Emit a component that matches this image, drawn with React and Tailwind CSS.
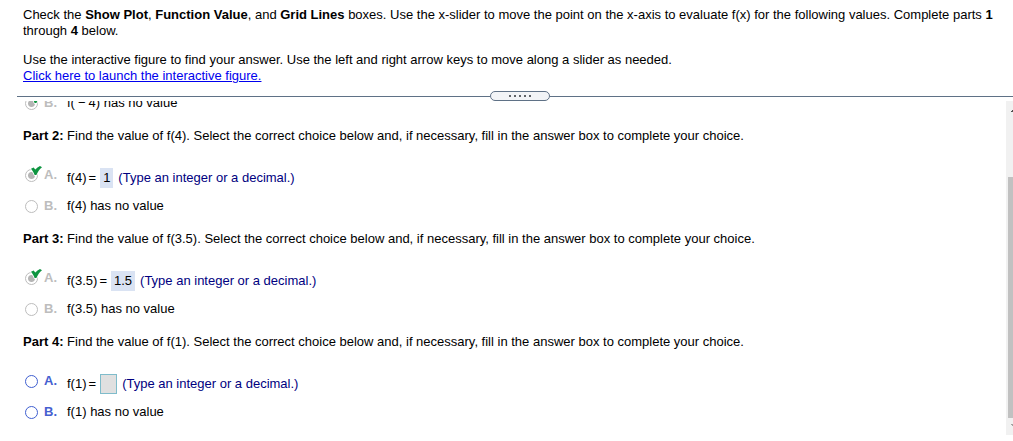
import React, { useState } from "react";

function CheckBadge() {
  return (
    <svg
      className="pointer-events-none absolute -top-[4px] left-[5px] h-[11px] w-[13px]"
      viewBox="-1 -1 13 11"
      aria-hidden="true"
    >
      <path
        d="M0 2.8 L2.6 1.4 L4.3 3.6 C5.7 2 7.2 0.8 9 0 L11 1.2 C8.6 3.2 6.9 5.6 5.4 9 L3.6 9 C2.8 6.8 1.6 5 0 2.8 Z"
        fill="#0d9440"
        stroke="#ffffff"
        strokeWidth="1.6"
        paintOrder="stroke"
      />
    </svg>
  );
}

function Choice({ name, letter, checked, disabled, onSelect, raised, children }) {
  const id = `${name}-${letter}`;
  return (
    <div className={raised ? "flex h-[22px] items-center" : "flex h-4 items-center"}>
      <div className={raised ? "flex h-4 w-11 items-center self-start pl-[2px]" : "flex h-4 w-11 items-center pl-[2px]"}>
        <span className="relative flex h-[13px] w-[13px] items-center justify-center">
          <input
            type="radio"
            id={id}
            name={name}
            checked={checked}
            disabled={disabled}
            onChange={onSelect}
            className="h-[13px] w-[13px] appearance-none rounded-full border border-[#3f5fd0] bg-white checked:bg-[radial-gradient(circle,#3f5fd0_0_3px,transparent_4px)] disabled:border-[#bdbdbd] disabled:checked:bg-[radial-gradient(circle,#b5b5b5_0_3px,transparent_4px)]"
          />
          {checked && disabled && <CheckBadge />}
        </span>
        <label
          htmlFor={id}
          className={disabled ? "ml-[6px] font-bold text-[#bdbdbd]" : "ml-[6px] font-bold text-[#4560d0]"}
        >
          {letter}.
        </label>
      </div>
      <div className="flex items-center whitespace-pre">{children}</div>
    </div>
  );
}

function Part({ number, arg, answer }) {
  const solved = answer !== undefined;
  const [choice, setChoice] = useState(solved ? "A" : null);
  const [value, setValue] = useState("");
  const name = `part-${number}`;
  return (
    <section>
      <p>
        <b>Part {number}:</b> Find the value of f({arg}). Select the correct choice below and, if necessary, fill in the
        answer box to complete your choice.
      </p>
      <div className="mt-[23px] flex flex-col gap-[9px]">
        <Choice name={name} letter="A" raised checked={choice === "A"} disabled={solved} onSelect={() => setChoice("A")}>
          <span className="flex gap-[2px]">
            <span>f({arg})</span>
            <span>=</span>
          </span>
          {solved ? (
            <span className="ml-1 bg-[#dae3f3] px-[3px] py-[2px]">{answer}</span>
          ) : (
            <input
              type="text"
              aria-label={`f(${arg})`}
              value={value}
              onChange={(e) => setValue(e.target.value)}
              className="ml-1 h-5 w-[17px] border border-[#7fbccb] bg-[#e0e0e0] text-center outline-none"
            />
          )}
          <span className="ml-[5px] text-[#000080]">(Type an integer or a decimal.)</span>
        </Choice>
        <Choice name={name} letter="B" checked={choice === "B"} disabled={solved} onSelect={() => setChoice("B")}>
          f({arg}) has no value
        </Choice>
      </div>
    </section>
  );
}

function ScrollTrack() {
  return (
    <div className="flex w-[7px] shrink-0 flex-col overflow-hidden bg-[#f1f1f1] pl-[2px]" aria-hidden="true">
      <svg className="mt-[8px] ml-[3px] h-[3px] w-[7px] shrink-0" viewBox="0 0 7 3">
        <path d="M0 3V2H1V1H2V0H4V3Z" fill="#505050" />
      </svg>
      <div className="mt-[65px] h-[241px] bg-[#c1c1c1]" />
      <svg className="mt-[6px] ml-[3px] h-[3px] w-[7px] shrink-0" viewBox="0 0 7 3">
        <path d="M0 0H4V3H2V2H1V1H0Z" fill="#a3a3a3" />
      </svg>
    </div>
  );
}

export default function App() {
  return (
    <main className="overflow-hidden bg-white font-['Liberation_Sans',Arial,sans-serif] text-[13px] leading-4 text-black">
      <header className="pt-[7px] pr-4 pl-[23px]">
        <p>
          Check the <b>Show Plot</b>, <b>Function Value</b>, and <b>Grid Lines</b> boxes. Use the x-slider to move the
          point on the x-axis to evaluate f(x) for the following values. Complete parts <b>1</b> through <b>4</b> below.
        </p>
        <p className="mt-[13px]">
          Use the interactive figure to find your answer. Use the left and right arrow keys to move along a slider as
          needed.
          <br />
          <a href="#figure" className="text-[#0000ee] underline">
            Click here to launch the interactive figure.
          </a>
        </p>
      </header>

      <div className="mt-[7px] -mr-[10px] flex items-center pl-[17px]">
        <div className="h-px flex-1 bg-[#5f7186]" />
        <button
          type="button"
          aria-label="Resize panels"
          className="flex h-[10px] w-[60px] items-center justify-center gap-[3px] rounded-full border border-[#5f7186] bg-[#f2f4f7]"
        >
          {[0, 1, 2, 3, 4].map((dot) => (
            <span key={dot} className="h-[2px] w-[2px] bg-[#5f6368]" />
          ))}
        </button>
        <div className="h-px flex-1 bg-[#5f7186]" />
      </div>

      <div className="flex">
        <div className="flex-1 overflow-hidden pb-[15px] pl-[23px]">
          <div className="-mt-[6px]">
            <Choice name="part-1" letter="B" checked disabled>
              <span className="flex gap-[3px]">
                <span>f(</span>
                <span>−</span>
                <span>4) has no value</span>
              </span>
            </Choice>
            <div className="mt-[17px] flex flex-col gap-[17px]">
              <Part number={2} arg="4" answer="1" />
              <Part number={3} arg="3.5" answer="1.5" />
              <Part number={4} arg="1" />
            </div>
          </div>
        </div>
        <ScrollTrack />
      </div>
    </main>
  );
}
